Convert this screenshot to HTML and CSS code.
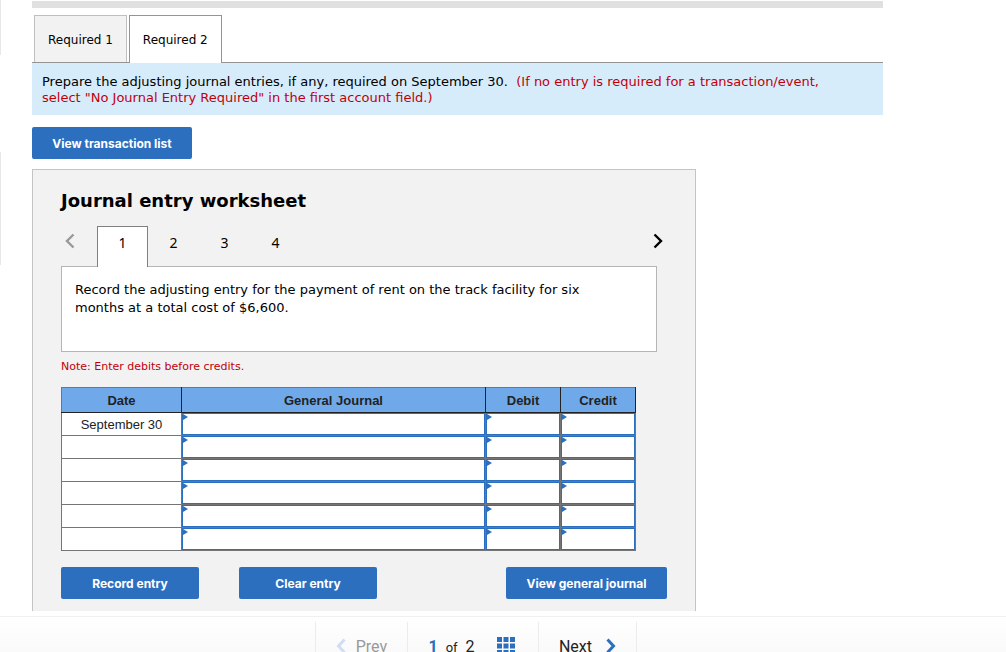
FILE: index.html
```html
<!DOCTYPE html>
<html lang="en">

<head>
	<title>Journal entry worksheet</title>
	<meta charset="utf-8"/>
	<meta name="viewport" content="width=device-width, initial-scale=1"/>

	<link rel="stylesheet" href="styles.css">
</head>

<body>
	<div class="page">
		<aside class="edge">
			<div class="edge-top"></div>
			<div class="edge-bottom"></div>
		</aside>

		<main class="content">
			<div class="divider"></div>

			<nav class="tabs">
				<button type="button" class="tab">Required 1</button>
				<button type="button" class="tab active">Required 2</button>
			</nav>

			<p class="instructions">Prepare the adjusting journal entries, if any, required on September 30.&nbsp; <span class="hint">(If no entry is required for a transaction/event, select "No Journal Entry Required" in the first account field.)</span></p>

			<button type="button" class="btn btn-list">View transaction list</button>

			<section class="worksheet">
				<h1>Journal entry worksheet</h1>

				<div class="steps">
					<button type="button" class="arrow prev" aria-label="Previous entry">
						<svg width="10" height="16" viewBox="0 0 10 16"><path d="M8.500 1.500L2 8l6.500 6.500" fill="none" stroke="#999" stroke-width="2.400"/></svg>
					</button>
					<button type="button" class="step active">1</button>
					<button type="button" class="step">2</button>
					<button type="button" class="step">3</button>
					<button type="button" class="step">4</button>
					<button type="button" class="arrow next" aria-label="Next entry">
						<svg width="10" height="16" viewBox="0 0 10 16"><path d="M1.500 1.500L8 8l-6.500 6.500" fill="none" stroke="#000" stroke-width="2.400"/></svg>
					</button>
				</div>

				<div class="transaction">
					<p>Record the adjusting entry for the payment of rent on the track facility for six months at a total cost of $6,600.</p>
				</div>

				<p class="note">Note: Enter debits before credits.</p>

				<table class="journal">
					<thead>
						<tr>
							<th class="date">Date</th>
							<th class="account">General Journal</th>
							<th class="amount">Debit</th>
							<th class="amount">Credit</th>
						</tr>
					</thead>
					<tbody>
						<tr>
							<td>September 30</td>
							<td class="entry"><input type="text" aria-label="Account 1"></td>
							<td class="entry"><input type="text" aria-label="Debit 1"></td>
							<td class="entry"><input type="text" aria-label="Credit 1"></td>
						</tr>
						<tr>
							<td></td>
							<td class="entry"><input type="text" aria-label="Account 2"></td>
							<td class="entry"><input type="text" aria-label="Debit 2"></td>
							<td class="entry"><input type="text" aria-label="Credit 2"></td>
						</tr>
						<tr>
							<td></td>
							<td class="entry"><input type="text" aria-label="Account 3"></td>
							<td class="entry"><input type="text" aria-label="Debit 3"></td>
							<td class="entry"><input type="text" aria-label="Credit 3"></td>
						</tr>
						<tr>
							<td></td>
							<td class="entry"><input type="text" aria-label="Account 4"></td>
							<td class="entry"><input type="text" aria-label="Debit 4"></td>
							<td class="entry"><input type="text" aria-label="Credit 4"></td>
						</tr>
						<tr>
							<td></td>
							<td class="entry"><input type="text" aria-label="Account 5"></td>
							<td class="entry"><input type="text" aria-label="Debit 5"></td>
							<td class="entry"><input type="text" aria-label="Credit 5"></td>
						</tr>
						<tr>
							<td></td>
							<td class="entry"><input type="text" aria-label="Account 6"></td>
							<td class="entry"><input type="text" aria-label="Debit 6"></td>
							<td class="entry"><input type="text" aria-label="Credit 6"></td>
						</tr>
					</tbody>
				</table>

				<div class="actions">
					<button type="button" class="btn">Record entry</button>
					<button type="button" class="btn">Clear entry</button>
					<button type="button" class="btn btn-journal">View general journal</button>
				</div>
			</section>
		</main>
	</div>

	<footer class="pager">
		<button type="button" class="pager-btn pager-prev" disabled>
			<svg width="10" height="16" viewBox="0 0 10 16"><path d="M8.500 1.500L2.500 8l6 6.500" fill="none" stroke="#d0ddf2" stroke-width="3"/></svg>
			Prev
		</button>
		<div class="pager-count">
			<span><b>1</b> <small>of</small> 2</span>
			<button type="button" class="grid-btn" aria-label="All questions">
				<svg width="18" height="18" viewBox="0 0 18 18" fill="#2c6fbf">
					<path d="M0 0h5v5H0zM6.500 0h5v5h-5zM13 0h5v5h-5zM0 6.500h5v5H0zM6.500 6.500h5v5h-5zM13 6.500h5v5h-5zM0 13h5v5H0zM6.500 13h5v5h-5zM13 13h5v5h-5z"/>
				</svg>
			</button>
		</div>
		<button type="button" class="pager-btn pager-next">
			Next
			<svg width="10" height="16" viewBox="0 0 10 16"><path d="M1.500 1.500l6 6.500-6 6.500" fill="none" stroke="#2c6fbf" stroke-width="3"/></svg>
		</button>
	</footer>
</body>
</html>
```
FILE: styles.css
```css
* {
	box-sizing: border-box;
}

body {
	margin: 0;
	overflow: hidden;
	background: white;
	color: black;
	font-family: Verdana, "DejaVu Sans", sans-serif;
	font-size: 13px;
}

button {
	margin: 0;
	padding: 0;
	border: none;
	background: none;
	font: inherit;
	color: inherit;
	cursor: pointer;
}

svg {
	display: block;
}

.page {
	display: flex;
	gap: 31px;
}

.edge {
	width: 1px;
}

.edge-top {
	height: 55px;
	margin-bottom: 97px;
	background: #e8e8e8;
}

.edge-bottom {
	height: 113px;
	background: #e8e8e8;
}

.content {
	flex: 1;
	max-width: 851px;
	padding-top: 1px;
}

.divider {
	height: 7px;
	background: #e0e0e0;
}

/* required 1 / required 2 */
.tabs {
	display: flex;
	gap: 2px;
	margin-top: 7px;
	padding-left: 2px;
	border-bottom: 1px solid #949494;
}

.tab {
	height: 47px;
	padding: 2px 13px 0;
	border: 1px solid #bfbfbf;
	border-bottom: none;
	background: #f2f2f2;
	font-size: 12px;
}

.tab.active {
	height: 48px;
	margin-bottom: -1px;
	padding-top: 0;
	border-color: #949494;
	background: white;
}

.instructions {
	margin: 0 0 12px;
	padding: 11px 40px 9px 10px;
	background: #d7ecfb;
	line-height: 16px;
}

.hint, .note {
	color: #c00008;
}

.btn {
	width: 138px;
	height: 32px;
	border-radius: 2px;
	background: #2c6fbf;
	color: white;
	font-family: Inter, sans-serif;
	font-size: 12px;
	font-weight: 700;
}

.btn-list {
	width: 160px;
}

.worksheet {
	max-width: 664px;
	margin-top: 10px;
	padding: 20px 28px 12px;
	border: 1px solid #c4c4c4;
	border-bottom: none;
	background: #f2f2f2;
}

h1 {
	margin: 0 0 14px;
	font-size: 18px;
	line-height: 22px;
}

/* entry numbers, the open one joins the box below */
.steps {
	display: flex;
	height: 40px;
}

.step {
	width: 51px;
	padding-bottom: 8px;
	font-family: "Noto Sans", sans-serif;
	font-size: 14px;
}

.step.active {
	height: 41px;
	padding-bottom: 10px;
	border: 1px solid #808080;
	border-bottom: none;
	background: white;
	z-index: 1;
}

.arrow {
	display: flex;
	padding: 7px 4px;
}

.prev {
	width: 36px;
}

.next {
	margin-left: auto;
}

.transaction {
	min-height: 86px;
	margin-right: 10px;
	padding: 14px 60px 14px 13px;
	border: 1px solid #b5b5b5;
	background: white;
	line-height: 18px;
}

.transaction p {
	margin: 0;
}

.note {
	margin: 7px 0 12px;
	font-size: 11px;
	line-height: 16px;
}

.journal {
	width: 575px;
	max-width: 100%;
	border-collapse: collapse;
	table-layout: fixed;
	background: white;
	color: #222;
	font-family: Arial, "Liberation Sans", sans-serif;
	text-align: center;
}

.journal th {
	height: 25px;
	padding: 0;
	border: 1px solid #222;
	border-top-color: #757575;
	background: #70a9ea;
}

.journal th:first-child {
	border-left-color: #757575;
}

.journal .date {
	width: 120px;
}

.journal .amount {
	width: 75px;
}

.journal td {
	height: 23px;
	padding: 0;
	border: 1px solid #757575;
}

.journal .entry {
	position: relative;
}

.entry input {
	display: block;
	width: 100%;
	height: 22px;
	padding: 0 6px;
	border: 1px solid #2c6fbf;
	border-radius: 0;
	background: white;
	font: inherit;
}

.entry::after {
	content: "";
	position: absolute;
	top: 1px;
	left: 1px;
	border: 3px solid transparent;
	border-left: 5px solid #2c6fbf;
	border-right: none;
}

.actions {
	display: flex;
	gap: 40px;
	margin-top: 16px;
}

.btn-journal {
	width: 161px;
	margin-left: auto;
}

/* bottom pager */
.pager {
	display: flex;
	justify-content: center;
	height: 54px;
	margin-top: 5px;
	padding: 5px 54px 0 0;
	border-top: 1px solid #f0f0f0;
	background: linear-gradient(white, #f7f7f7);
	color: #222;
	font-family: Roboto, sans-serif;
	font-size: 16px;
}

.pager-btn, .pager-count {
	display: flex;
	align-items: center;
	justify-content: center;
	gap: 10px;
	border-left: 1px solid #ececec;
}

.pager-prev {
	width: 92px;
	color: #999;
}

.pager-count {
	width: 131px;
	padding-right: 3px;
	gap: 22px;
}

.pager-count b {
	color: #2c6fbf;
}

.pager-count small {
	margin: 0 4px;
	font-size: 13px;
}

.pager-next {
	width: 99px;
	gap: 14px;
	border-right: 1px solid #ececec;
}
```
